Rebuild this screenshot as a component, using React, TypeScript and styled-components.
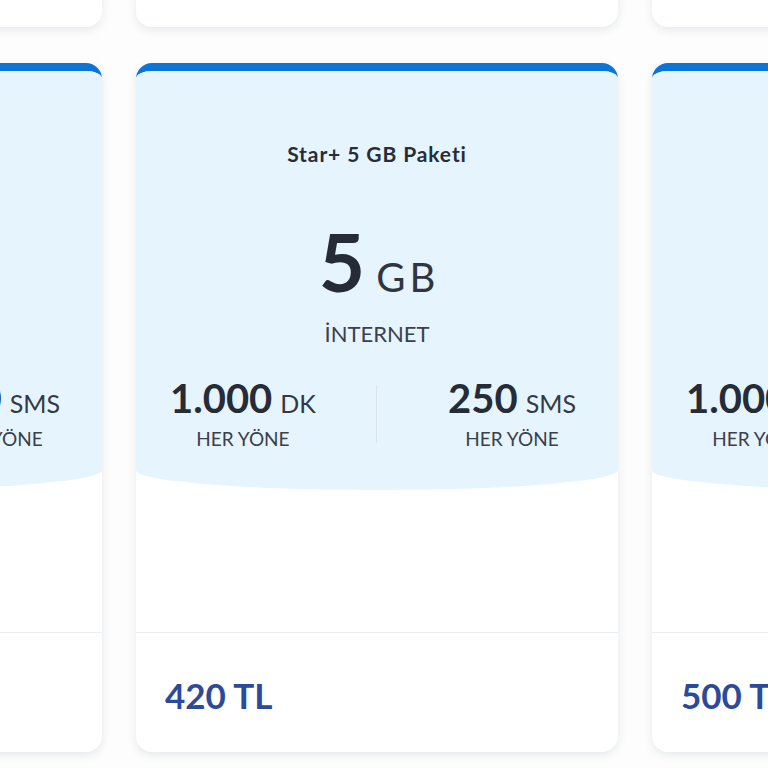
import React from "react";
import styled, { createGlobalStyle } from "styled-components";

type Pack = {
  title: string;
  gb: string;
  minutes: string;
  sms: string;
  price: string;
};

const packs: Pack[] = [
  { title: "Star+ 3 GB Paketi", gb: "3", minutes: "750", sms: "250", price: "360 TL" },
  { title: "Star+ 4 GB Paketi", gb: "4", minutes: "1.000", sms: "250", price: "390 TL" },
  { title: "Star+ 10 GB Paketi", gb: "10", minutes: "1.000", sms: "500", price: "560 TL" },
  { title: "Star+ 2 GB Paketi", gb: "2", minutes: "500", sms: "250", price: "340 TL" },
  { title: "Star+ 5 GB Paketi", gb: "5", minutes: "1.000", sms: "250", price: "420 TL" },
  { title: "Star+ 8 GB Paketi", gb: "8", minutes: "1.000", sms: "500", price: "500 TL" },
];

const GlobalStyle = createGlobalStyle`
  html, body {
    margin: 0;
    padding: 0;
    background: #fdfdfd;
  }
  body {
    font-family: Lato, "Liberation Sans", sans-serif;
  }
`;

const App = () => {
  return (
    <>
      <GlobalStyle />
      <Page>
        <Grid>
          {packs.map((p, i) => (
            <Card key={i}>
              <Header>
                <Title>{p.title}</Title>
                <BigRow>
                  <BigValue>{p.gb}</BigValue>
                  <BigUnit>GB</BigUnit>
                </BigRow>
                <Label>İNTERNET</Label>
                <Stats>
                  <Stat>
                    <StatTop>
                      <StatValue>{p.minutes}</StatValue>
                      <StatUnit>DK</StatUnit>
                    </StatTop>
                    <StatLabel>HER YÖNE</StatLabel>
                  </Stat>
                  <VDivider />
                  <Stat>
                    <StatTop>
                      <StatValue>{p.sms}</StatValue>
                      <StatUnit>SMS</StatUnit>
                    </StatTop>
                    <StatLabel>HER YÖNE</StatLabel>
                  </Stat>
                </Stats>
              </Header>
              <Body />
              <Footer>
                <Price>{p.price}</Price>
              </Footer>
            </Card>
          ))}
        </Grid>
      </Page>
    </>
  );
};

export default App;

const Page = styled.div`
  width: 768px;
  height: 768px;
  overflow: hidden;
  background: #fdfdfd;
`;

const Grid = styled.div`
  display: grid;
  grid-template-columns: repeat(3, 482px);
  column-gap: 34px;
  row-gap: 36px;
  margin-left: -380px;
  margin-top: -662px;
`;

const Card = styled.div`
  height: 689px;
  box-sizing: border-box;
  display: flex;
  flex-direction: column;
  background: #ffffff;
  border-top: 8px solid #0a74d8;
  border-radius: 16px;
  overflow: hidden;
  box-shadow: 0 3px 10px rgba(30, 45, 70, 0.1);
`;

const Header = styled.div`
  height: 419px;
  flex-shrink: 0;
  box-sizing: border-box;
  padding-top: 71px;
  display: flex;
  flex-direction: column;
  align-items: center;
  background: #e6f4fd;
  border-radius: 0 0 50% 50% / 0 0 20px 20px;
`;

const Title = styled.div`
  font-size: 21px;
  line-height: 24px;
  font-weight: 700;
  letter-spacing: 0.9px;
  color: #272d38;
`;

const BigRow = styled.div`
  margin-top: 55px;
  display: flex;
  align-items: baseline;
  gap: 11px;
  line-height: 1;
  color: #262c37;
`;

const BigValue = styled.span`
  font-size: 80px;
  font-weight: 700;
`;

const BigUnit = styled.span`
  font-size: 40px;
  font-weight: 400;
  letter-spacing: 4px;
  margin-right: -4px;
  color: #2f3541;
`;

const Label = styled.div`
  margin-top: 20px;
  font-size: 22px;
  line-height: 26px;
  color: #3a404c;
`;

const Stats = styled.div`
  margin-top: 31px;
  align-self: stretch;
  padding: 0 42px 0 34px;
  display: flex;
  justify-content: space-between;
  align-items: center;
`;

const Stat = styled.div`
  display: flex;
  flex-direction: column;
  align-items: center;
`;

const StatTop = styled.div`
  display: flex;
  align-items: baseline;
  gap: 8px;
  line-height: 1;
  color: #262c37;
`;

const StatValue = styled.span`
  font-size: 40px;
  font-weight: 700;
`;

const StatUnit = styled.span`
  font-size: 25px;
  font-weight: 400;
  color: #333945;
`;

const StatLabel = styled.div`
  margin-top: 10px;
  font-size: 19px;
  line-height: 22px;
  color: #3a404c;
`;

const VDivider = styled.div`
  width: 1px;
  height: 58px;
  margin-right: 10px;
  background: #d9e4ec;
`;

const Body = styled.div`
  flex: 1;
`;

const Footer = styled.div`
  height: 120px;
  flex-shrink: 0;
  box-sizing: border-box;
  border-top: 1px solid #eceff2;
  padding: 45px 29px 0;
`;

const Price = styled.div`
  font-size: 35px;
  line-height: 1;
  font-weight: 700;
  color: #2c4a9b;
`;
